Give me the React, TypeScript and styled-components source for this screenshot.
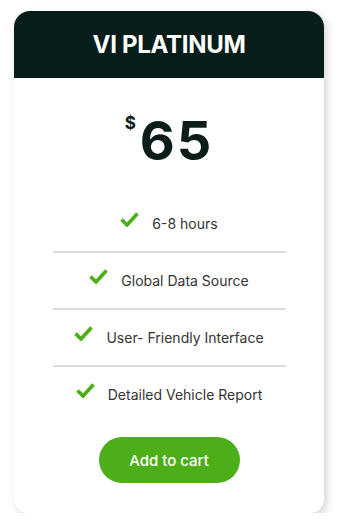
import styled, { createGlobalStyle } from "styled-components";

const GlobalStyle = createGlobalStyle`
  body {
    margin: 0;
    background: #ffffff;
    font-family: Inter, "Noto Sans", sans-serif;
  }
`;

const Card = styled.div`
  width: 310px;
  margin: 11px 0 0 14px;
  background: #fff;
  border-radius: 16px 16px 14px 14px;
  box-shadow: 3px 4px 10px rgba(0, 0, 0, 0.16);
  overflow: hidden;
`;

const Header = styled.header`
  height: 67px;
  background: #071d19;
  display: flex;
  align-items: center;
  justify-content: center;
`;

const Title = styled.h2`
  margin: 0;
  color: #fff;
  font-size: 24px;
  font-weight: 700;
  letter-spacing: -0.3px;
`;

const Body = styled.div`
  padding: 36px 0 30px;
  display: flex;
  flex-direction: column;
  align-items: center;
`;

const Price = styled.div`
  display: flex;
  align-items: flex-start;
  color: #0b1d1a;
  font-weight: 700;
  line-height: 1;
`;

const Currency = styled.span`
  font-size: 17px;
  margin: 1px 4px 0 0;
`;

const Amount = styled.span`
  font-size: 54px;
  letter-spacing: 2px;
`;

const Features = styled.ul`
  list-style: none;
  margin: 28px 0 0;
  padding: 0;
  width: 233px;
`;

const Feature = styled.li<{ last?: boolean }>`
  height: 55px;
  display: flex;
  align-items: center;
  justify-content: center;
  gap: 13px;
  border-bottom: ${(p) => (p.last ? "none" : "2px solid #dcdcdc")};
  color: #333;
  font-size: 14px;
`;

const Check = styled.svg`
  width: 19px;
  height: 16px;
  margin-top: -9px;
  flex-shrink: 0;
`;

const CartButton = styled.button`
  margin-top: 15px;
  width: 141px;
  height: 46px;
  border: none;
  border-radius: 23px;
  background: #4caf18;
  color: #fff;
  font-family: inherit;
  font-size: 15px;
  font-weight: 500;
  cursor: pointer;
`;

const features = [
  "6-8 hours",
  "Global Data Source",
  "User- Friendly Interface",
  "Detailed Vehicle Report",
];

export default function App() {
  return (
    <>
      <GlobalStyle />
      <Card>
        <Header>
          <Title>VI PLATINUM</Title>
        </Header>
        <Body>
          <Price>
            <Currency>$</Currency>
            <Amount>65</Amount>
          </Price>
          <Features>
            {features.map((f, i) => (
              <Feature key={f} last={i === features.length - 1}>
                <Check viewBox="0 0 19 16">
                  <path d="M1.5 8.5 L7 14 L17.5 2.5" fill="none" stroke="#4caf18" strokeWidth="3.6" />
                </Check>
                <span>{f}</span>
              </Feature>
            ))}
          </Features>
          <CartButton>Add to cart</CartButton>
        </Body>
      </Card>
    </>
  );
}
